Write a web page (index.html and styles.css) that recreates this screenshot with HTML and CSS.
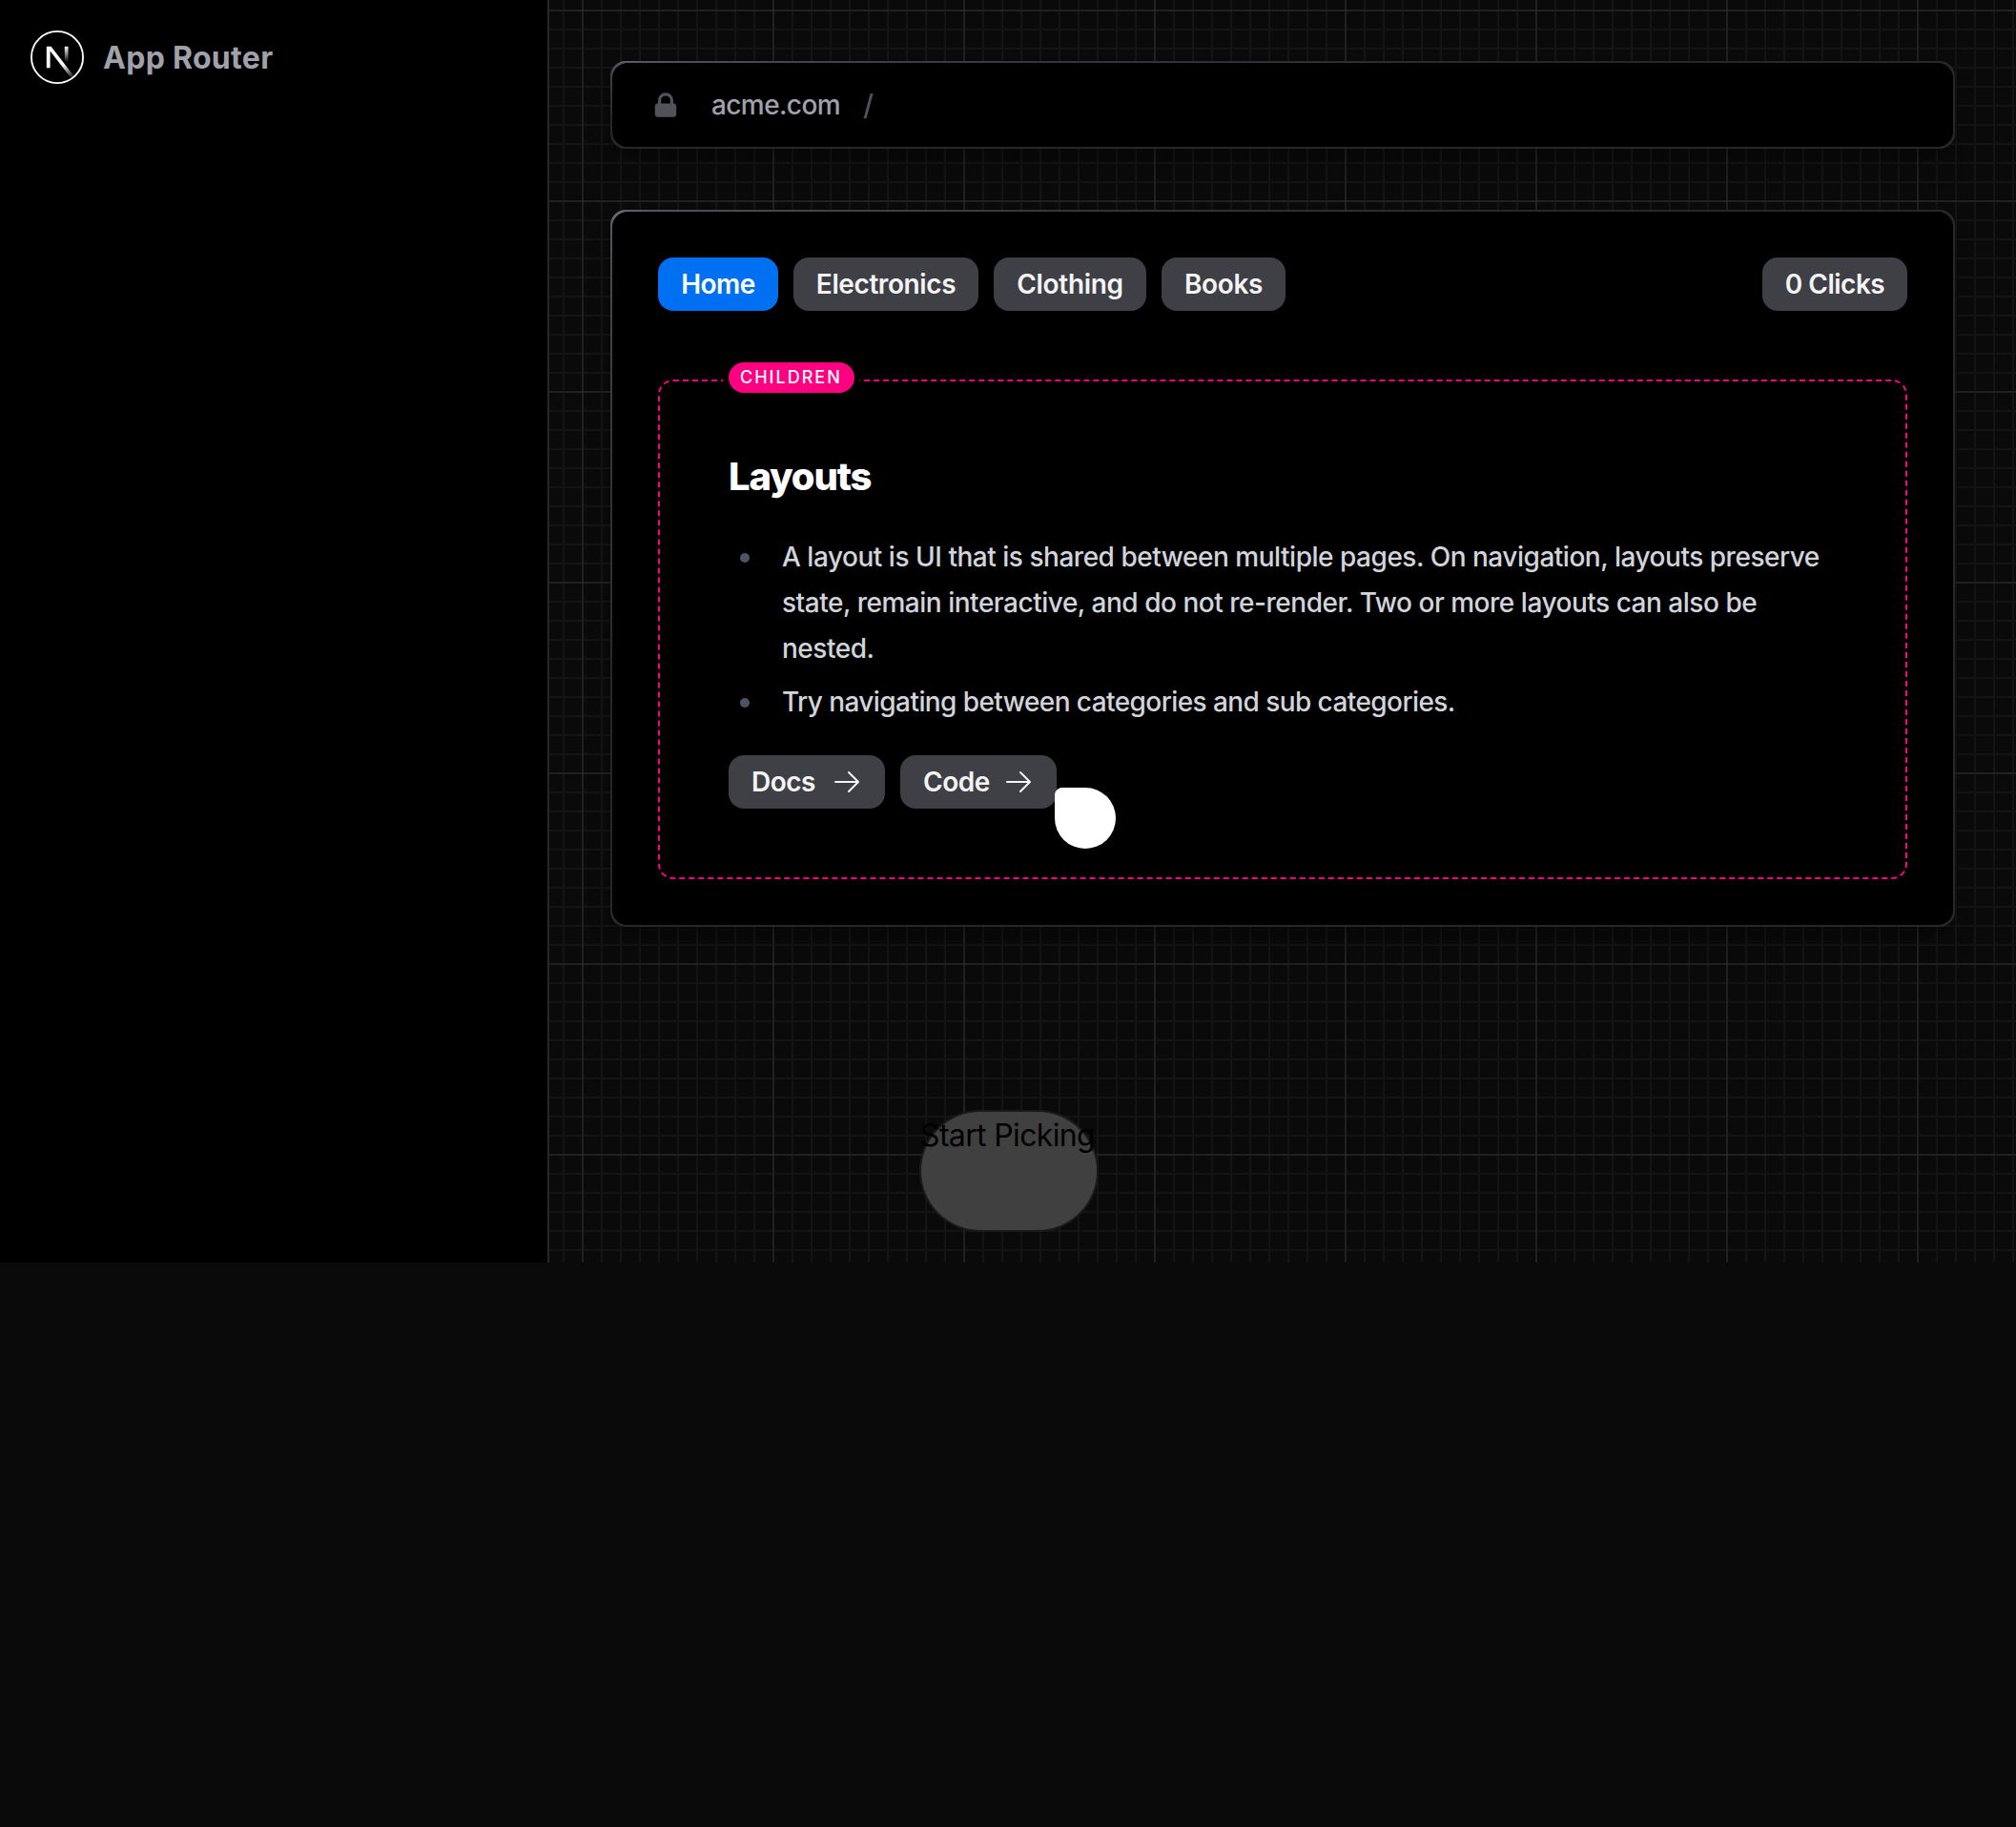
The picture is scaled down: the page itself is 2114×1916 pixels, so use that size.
FILE: index.html
```html
<!DOCTYPE html>
<html lang="en">
<head>
<meta charset="utf-8">
<title>App Router</title>
<link rel="stylesheet" href="styles.css">
</head>
<body>
<div class="app">
  <aside class="sidebar">
    <a class="brand">
      <svg class="brand-logo" viewBox="0 0 180 180" fill="none">
        <defs>
          <linearGradient id="diag" x1="109" y1="116.5" x2="144.5" y2="160.5" gradientUnits="userSpaceOnUse"><stop stop-color="#fff"/><stop offset="1" stop-color="#fff" stop-opacity="0"/></linearGradient>
          <linearGradient id="stem" x1="121" y1="54" x2="120.8" y2="106.875" gradientUnits="userSpaceOnUse"><stop stop-color="#fff"/><stop offset="1" stop-color="#fff" stop-opacity="0"/></linearGradient>
        </defs>
        <circle cx="90" cy="90" r="87" fill="#000" stroke="#fff" stroke-width="6"/>
        <path fill="url(#diag)" d="M149.508 157.52L69.142 54H54V125.97H66.1136V69.3836L139.999 164.845C143.333 162.614 146.509 160.165 149.508 157.52Z"/>
        <rect x="115" y="54" width="12" height="72" fill="url(#stem)"/>
      </svg>
      <span class="brand-name">App Router</span>
    </a>
  </aside>
  <main class="main">
    <div class="frame">
      <div class="address">
        <svg class="lock" viewBox="0 0 20 20" fill="currentColor"><path fill-rule="evenodd" clip-rule="evenodd" d="M5 9V7a5 5 0 0110 0v2a2 2 0 012 2v5a2 2 0 01-2 2H5a2 2 0 01-2-2v-5a2 2 0 012-2zm8-2v2H7V7a3 3 0 016 0z"/></svg>
        <span class="host">acme.com</span>
        <span class="slash">/</span>
      </div>
    </div>
    <div class="frame">
      <div class="card">
        <nav class="tabs">
          <div class="tab-list">
            <a class="button button-home">Home</a>
            <a class="button button-electronics">Electronics</a>
            <a class="button button-clothing">Clothing</a>
            <a class="button button-books">Books</a>
          </div>
          <button class="button button-clicks">0 Clicks</button>
        </nav>
        <section class="boundary">
          <span class="boundary-label">children</span>
          <h1 class="title">Layouts</h1>
          <ul class="notes">
            <li class="note">A layout is UI that is shared between multiple pages. On navigation, layouts preserve state, remain interactive, and do not re-render. Two or more layouts can also be nested.</li>
            <li class="note note-short">Try navigating between categories and sub categories.</li>
          </ul>
          <div class="links">
            <a class="button button-link">Docs<svg class="arrow" viewBox="0 0 24 24"><path d="M13.5 4.5L21 12m0 0l-7.5 7.5M21 12H3"/></svg></a>
            <a class="button button-link">Code<svg class="arrow" viewBox="0 0 24 24"><path d="M13.5 4.5L21 12m0 0l-7.5 7.5M21 12H3"/></svg></a>
          </div>
        </section>
      </div>
    </div>
  </main>
  <div class="picker">Start Picking</div>
  <div class="cursor"></div>
</div>
</body>
</html>
```
FILE: styles.css
```css
* { box-sizing: border-box; }

body {
  margin: 0;
  background: #0a0a0a;
  font-family: Inter, "Liberation Sans", sans-serif;
}

.app {
  position: relative;
  display: flex;
  height: 1324px;
  background:
    linear-gradient(90deg, #ffffff0d 2px, transparent 2px) 10px 10px / 200px 200px,
    linear-gradient(#ffffff0d 2px, transparent 2px) 10px 10px / 200px 200px,
    linear-gradient(90deg, #141414 2px, transparent 2px) 10px 10px / 20px 20px,
    linear-gradient(#141414 2px, transparent 2px) 10px 10px / 20px 20px,
    #0a0a0a;
}

.sidebar {
  flex: none;
  width: 576px;
  padding: 32px;
  background: #000;
  border-right: 2px solid #27272a;
}

.brand { display: flex; align-items: center; gap: 20px; }
.brand-logo { width: 56px; height: 56px; }
.brand-name {
  padding-top: 2px;
  font-size: 32px;
  line-height: 48px;
  font-weight: 660;
  letter-spacing: 0.3px;
  color: #a1a1aa;
}

.main {
  flex: 1;
  display: flex;
  flex-direction: column;
  gap: 64px;
  padding: 64px;
}

.frame {
  padding: 2px;
  border-radius: 16px;
  background: radial-gradient(at left top, #71717a, 100px, #27272a 50%);
  box-shadow: 0 20px 30px -6px #00000033, 0 8px 12px -8px #00000033;
}

.address, .card { border-radius: 16px; background: #000; }

.address {
  display: flex;
  align-items: center;
  height: 88px;
  padding: 0 40px;
  font-size: 28px;
  line-height: 40px;
  font-weight: 550;
}
.lock { width: 32px; height: 32px; color: #52525b; }
.host { width: 136px; margin-left: 32px; letter-spacing: -0.6px; color: #a1a1aa; }
.slash { margin-left: 23px; font-size: 30px; color: #52525b; }

.card { padding: 48px; }

.tabs { display: flex; justify-content: space-between; }
.tab-list, .links { display: flex; gap: 16px; }

.button {
  display: flex;
  align-items: center;
  justify-content: center;
  padding: 8px 0;
  border: 0;
  border-radius: 16px;
  background: #3f3f46;
  color: #f4f4f5;
  font: 590 28px/40px Inter, "Liberation Sans", sans-serif;
  letter-spacing: -0.4px;
  white-space: nowrap;
}
.button-home { width: 126px; background: #0070f3; color: #fff; letter-spacing: -0.6px; }
.button-electronics { width: 194px; }
.button-clothing { width: 160px; letter-spacing: -0.3px; }
.button-books { width: 130px; }
.button-clicks { width: 152px; letter-spacing: -0.5px; }
.button-link { width: 164px; padding: 8px 24px; justify-content: space-between; letter-spacing: -0.5px; }

.arrow {
  width: 32px;
  height: 32px;
  fill: none;
  stroke: currentColor;
  stroke-width: 1.5;
  stroke-linecap: round;
  stroke-linejoin: round;
}

.boundary {
  position: relative;
  margin-top: 72px;
  padding: 72px;
  border: 2px dashed #ff0080;
  border-radius: 16px;
}
.boundary-label {
  position: absolute;
  top: -20px;
  left: 72px;
  width: 132px;
  padding: 0 12px;
  border-radius: 16px;
  background: #ff0080;
  box-shadow: 0 0 2px 6px #000;
  color: #fff;
  font-size: 18px;
  font-weight: 470;
  line-height: 32px;
  letter-spacing: 2px;
  text-transform: uppercase;
}

.title {
  margin: 0 0 32px;
  font-size: 40px;
  line-height: 56px;
  font-weight: 780;
  letter-spacing: -1.2px;
  color: #fff;
}

.notes {
  display: flex;
  flex-direction: column;
  gap: 8px;
  margin: 0 0 32px;
  padding: 0;
  list-style: none;
  font-size: 28px;
  font-weight: 460;
  line-height: 48px;
  letter-spacing: -0.48px;
  color: #d1d5db;
}
.note { position: relative; padding-left: 56px; }
.note-short { letter-spacing: -0.58px; }
.note::before {
  content: "";
  position: absolute;
  top: 20px;
  left: 12px;
  width: 10px;
  height: 10px;
  border-radius: 50%;
  background: #4b5563;
}

.picker {
  position: absolute;
  left: 966px;
  bottom: 34px;
  width: 184px;
  height: 124px;
  border-radius: 62px;
  background: #404040;
  box-shadow: 0 0 0 2px #1a1a1a;
  color: #000;
  font-size: 32px;
  font-weight: 430;
  line-height: 50px;
  letter-spacing: -0.65px;
  text-indent: -1px;
  white-space: nowrap;
}

.cursor {
  position: absolute;
  left: 1106px;
  top: 826px;
  width: 64px;
  height: 64px;
  border-radius: 8px 32px 32px 32px;
  background: #fff;
}
```
